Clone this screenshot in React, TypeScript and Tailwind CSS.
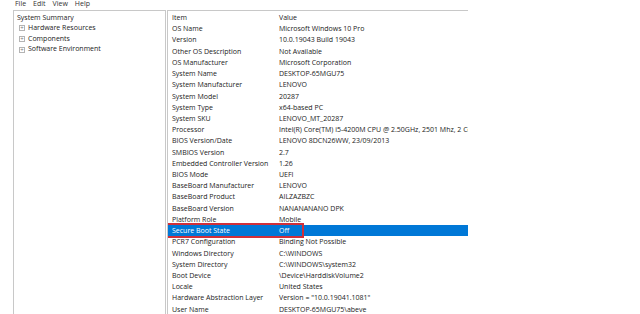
const rows: [string, string][] = [
  ["OS Name", "Microsoft Windows 10 Pro"],
  ["Version", "10.0.19043 Build 19043"],
  ["Other OS Description", "Not Available"],
  ["OS Manufacturer", "Microsoft Corporation"],
  ["System Name", "DESKTOP-65MGU75"],
  ["System Manufacturer", "LENOVO"],
  ["System Model", "20287"],
  ["System Type", "x64-based PC"],
  ["System SKU", "LENOVO_MT_20287"],
  ["Processor", "Intel(R) Core(TM) i5-4200M CPU @ 2.50GHz, 2501 Mhz, 2 Core(s), 4 Logical Processor(s)"],
  ["BIOS Version/Date", "LENOVO 8DCN26WW, 23/09/2013"],
  ["SMBIOS Version", "2.7"],
  ["Embedded Controller Version", "1.26"],
  ["BIOS Mode", "UEFI"],
  ["BaseBoard Manufacturer", "LENOVO"],
  ["BaseBoard Product", "AILZAZBZC"],
  ["BaseBoard Version", "NANANANANO DPK"],
  ["Platform Role", "Mobile"],
  ["Secure Boot State", "Off"],
  ["PCR7 Configuration", "Binding Not Possible"],
  ["Windows Directory", "C:\\WINDOWS"],
  ["System Directory", "C:\\WINDOWS\\system32"],
  ["Boot Device", "\\Device\\HarddiskVolume2"],
  ["Locale", "United States"],
  ["Hardware Abstraction Layer", "Version = \"10.0.19041.1081\""],
  ["User Name", "DESKTOP-65MGU75\\abeve"],
];

function Plus() {
  return (
    <span className="inline-flex w-[6px] h-[6px] border border-[#b4b4b4] items-center justify-center text-[6px] leading-none text-[#777] mr-[3px]">
      +
    </span>
  );
}

export default function App() {
  return (
    <div
      className="w-[640px] h-[314px] bg-white overflow-hidden text-[#222]"
      style={{ fontFamily: '"Open Sans", "Noto Sans", sans-serif' }}
    >
      <div className="h-[10px] flex gap-[7px] pl-[15px] text-[7px] leading-[8px] text-[#333]">
        <span>File</span>
        <span>Edit</span>
        <span>View</span>
        <span>Help</span>
      </div>
      <div className="flex pl-[13px]">
        <div className="w-[153px] h-[310px] border-t border-l border-r border-[#c8c8c8] pt-[1px] text-[7px]">
          <div className="h-[11px] leading-[11px] pl-[3px]">System Summary</div>
          {["Hardware Resources", "Components", "Software Environment"].map((t) => (
            <div key={t} className="h-[10.7px] leading-[10.7px] pl-[5px] flex items-center">
              <Plus />
              {t}
            </div>
          ))}
        </div>
        <div className="w-[2px] h-[310px] border-r border-[#c8c8c8]" />
        <div className="w-[300px] h-[310px] border-t border-[#c8c8c8] text-[7px] pt-[1px] overflow-hidden">
          <div className="flex h-[11.2px] leading-[11.2px]">
            <div className="w-[111px] shrink-0 pl-[4px]">Item</div>
            <div>Value</div>
          </div>
          {rows.map(([k, v]) => {
            const sel = k === "Secure Boot State";
            if (sel) {
              return (
                <div key={k} className="flex h-[11.23px] leading-[11.23px] whitespace-nowrap bg-[#0078d7] text-white">
                  <div className="flex w-[134px] shrink-0 ring-2 ring-[#d0303a]">
                    <div className="w-[111px] shrink-0 pl-[4px]">{k}</div>
                    <div>{v}</div>
                  </div>
                </div>
              );
            }
            return (
              <div key={k} className="flex h-[11.23px] leading-[11.23px] whitespace-nowrap">
                <div className="w-[111px] shrink-0 pl-[4px]">{k}</div>
                <div>{v}</div>
              </div>
            );
          })}
        </div>
      </div>
    </div>
  );
}
